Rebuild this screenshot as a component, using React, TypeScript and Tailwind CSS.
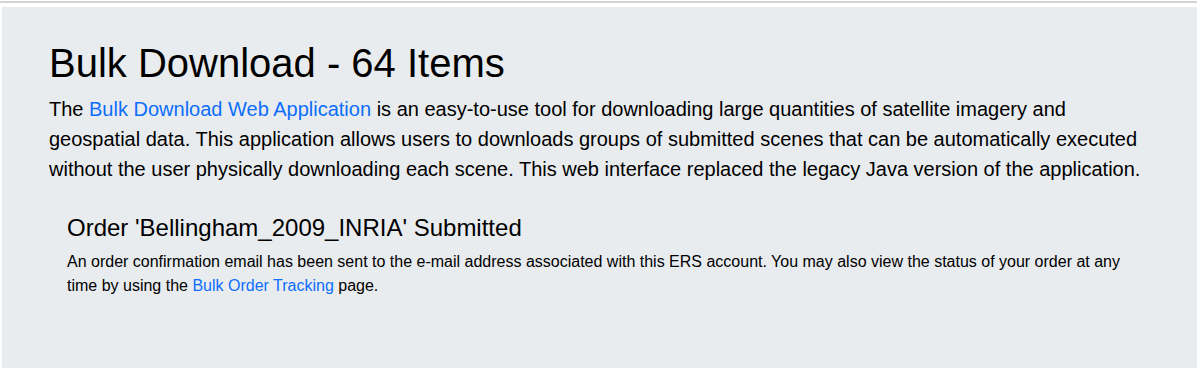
export default function App() {
  return (
    <div className="min-h-[372px] bg-white font-['Liberation_Sans',Arial,sans-serif] text-black">
      <div className="h-[2px] mt-px bg-[#d4d4d4]" />
      <div className="mt-[4px] ml-[2px] h-[361px] bg-[#e9ecef] pl-[47px] pr-[40px] pt-[32px]">
        <h1 className="text-[40px] leading-[48px] mb-[7px]">Bulk Download - 64 Items</h1>
        <p className="text-[20px] leading-[30px]">
          The{" "}
          <a href="#" className="text-[#0d6efd]">
            Bulk Download Web Application
          </a>{" "}
          is an easy-to-use tool for downloading large quantities of satellite imagery and geospatial data. This
          application allows users to downloads groups of submitted scenes that can be automatically executed
          without the user physically downloading each scene. This web interface replaced the legacy Java version
          of the application.
        </p>
        <div className="pl-[18px] pr-[35px] pt-[29px]">
          <h4 className="text-[24px] leading-[29px] mb-[8px]">Order 'Bellingham_2009_INRIA' Submitted</h4>
          <p className="text-[16px] leading-[24px]">
            An order confirmation email has been sent to the e-mail address associated with this ERS account. You
            may also view the status of your order at any time by using the{" "}
            <a href="#" className="text-[#0d6efd]">
              Bulk Order Tracking
            </a>{" "}
            page.
          </p>
        </div>
      </div>
    </div>
  );
}
